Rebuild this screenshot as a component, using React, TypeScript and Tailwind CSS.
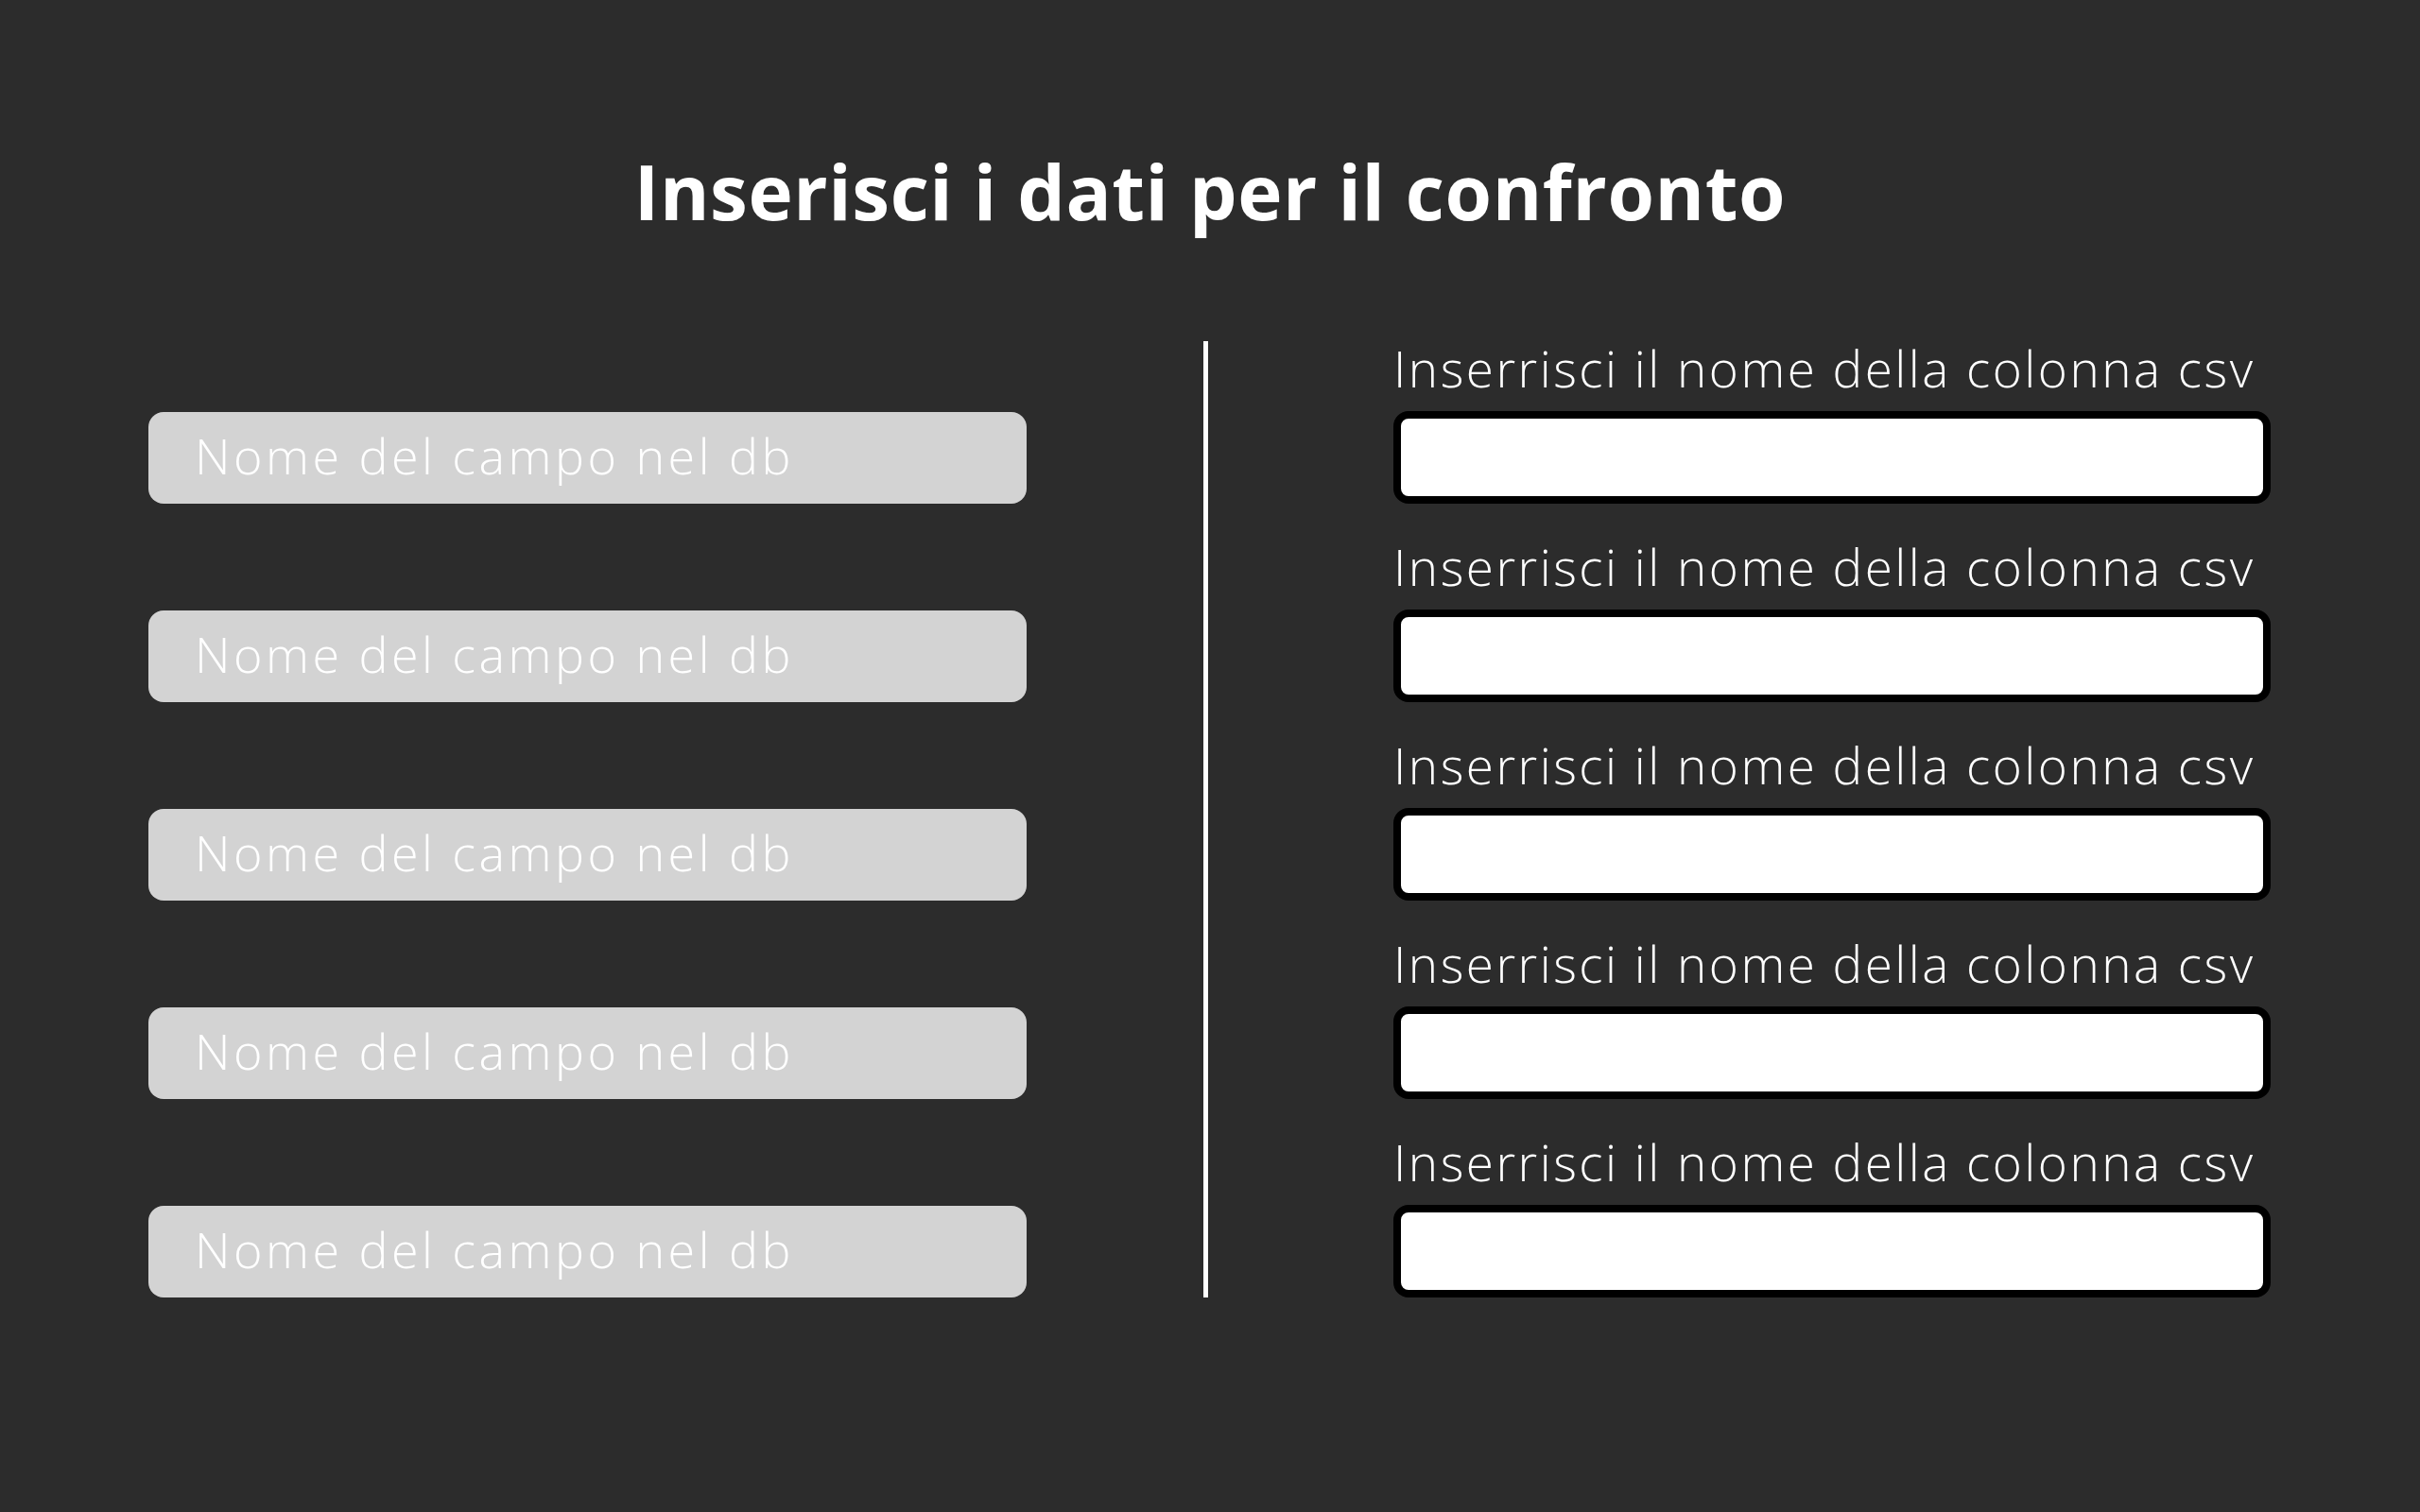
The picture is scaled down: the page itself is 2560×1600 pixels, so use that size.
import React from "react";

const rows = [0, 1, 2, 3, 4];

const App = () => {
  return (
    <div
      className="w-[2560px] h-[1600px] bg-[#2c2c2c] text-white"
      style={{ fontFamily: "'Open Sans', Lato, sans-serif" }}
    >
      {/* Title */}
      <div className="pt-[162px] flex justify-center">
        <h1 className="text-[80px] leading-none font-bold tracking-[0.6px]">
          Inserisci i dati per il confronto
        </h1>
      </div>

      <div className="mt-[119px] px-[157px] flex items-start">
        {/* Left: db fields */}
        <div className="w-[929px] pt-[75px] flex flex-col gap-[113px]">
          {rows.map((i) => (
            <div
              key={i}
              className="h-[97px] rounded-[16px] bg-[#d3d3d3] flex items-center pl-[49px] pb-[5px]"
            >
              <span className="text-[52px] leading-none font-light tracking-[3.5px] text-white">
                Nome del campo nel db
              </span>
            </div>
          ))}
        </div>

        {/* Divider */}
        <div className="ml-[187px] w-[5px] h-[1012px] bg-white" />

        {/* Right: csv columns */}
        <div className="ml-[196px] w-[928px] pt-[2px] flex flex-col gap-[40px]">
          {rows.map((i) => (
            <div key={i} className="flex flex-col">
              <label className="text-[53px] leading-none font-light tracking-[2.5px] text-white mb-[19px]">
                Inserrisci il nome della colonna csv
              </label>
              <input
                type="text"
                className="h-[98px] w-full rounded-[16px] border-[8px] border-black bg-white outline-none"
              />
            </div>
          ))}
        </div>
      </div>
    </div>
  );
};

export default App;
